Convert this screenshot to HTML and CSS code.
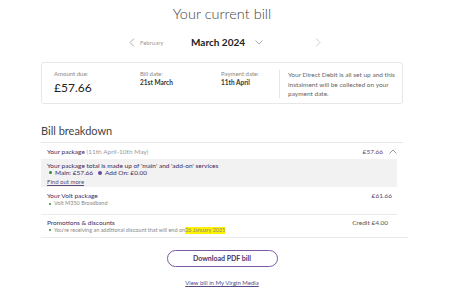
FILE: index.html
```html
<!DOCTYPE html>
<html><head>
    <meta charset="utf-8">
    <title>Your current bill</title>
    <link rel="stylesheet" href="styles.css">
</head>
<body>
    <div class="page">
        <h1 class="title">Your current bill</h1>

        <div class="month-nav">
            <span class="nav-prev">
                <svg width="6" height="9" viewBox="0 0 6 9"><path d="M5 0.5 L1 4.5 L5 8.5" fill="none" stroke="#aaa" stroke-width="1"/></svg>
                February
            </span>
            <span class="nav-current">March 2024
                <svg width="8" height="5" viewBox="0 0 8 5"><path d="M0.5 0.5 L4 4 L7.5 0.5" fill="none" stroke="#aaa" stroke-width="1"/></svg>
            </span>
            <span class="nav-next">
                <svg width="6" height="9" viewBox="0 0 6 9"><path d="M1 0.5 L5 4.5 L1 8.5" fill="none" stroke="#ccc" stroke-width="1"/></svg>
            </span>
        </div>

        <div class="summary">
            <div class="sum-col amount">
                <div class="label">Amount due:</div>
                <div class="big">£57.66</div>
            </div>
            <div class="sum-col bill-date">
                <div class="label">Bill date:</div>
                <div class="val">21st March</div>
            </div>
            <div class="sum-col pay-date">
                <div class="label">Payment date:</div>
                <div class="val">11th April</div>
            </div>
            <div class="sum-note">Your Direct Debit is all set up and this instalment will be collected on your payment date.</div>
        </div>

        <h2 class="section">Bill breakdown</h2>

        <div class="breakdown">
            <div class="row head">
                <span class="row-title">Your package <span class="muted">(11th April-10th May)</span></span>
                <span class="price">£57.66
                    <svg width="8" height="5" viewBox="0 0 8 5"><path d="M0.5 4.5 L4 1 L7.5 4.5" fill="none" stroke="#999" stroke-width="1"/></svg>
                </span>
            </div>
            <div class="info">
                <div>Your package total is made up of 'main' and 'add-on' services</div>
                <div class="split"><span class="dot green"></span>Main: £57.66 <span class="dot purple"></span>Add On: £0.00</div>
                <a class="find" href="#">Find out more</a>
            </div>
            <div class="row item">
                <div>
                    <div class="row-title">Your Volt package</div>
                    <div class="sub"><span class="dot green small"></span>Volt M350 Broadband</div>
                </div>
                <span class="price volt">£61.66</span>
            </div>
            <div class="row item last">
                <div>
                    <div class="row-title">Promotions &amp; discounts</div>
                    <div class="sub"><span class="dot green small"></span>You're receiving an additional discount that will end on<mark>26 January 2025</mark></div>
                </div>
                <span class="price credit">Credit £4.00</span>
            </div>
        </div>

        <div class="actions">
            <a class="btn" href="#">Download PDF bill</a>
            <a class="link" href="#">View bill in My Virgin Media</a>
        </div>
    </div>
</body></html>
```

FILE: styles.css
```css
body{
    margin: 0;
    background: #fff;
    font-family: Lato, "Noto Sans", sans-serif;
    color: #333;
}
.page{
    margin: 0 47px 0 41px;
}
.title{
    margin: 0;
    padding-top: 5px;
    text-align: center;
    font-weight: 300;
    font-size: 14.5px;
    color: #444;
    line-height: 18px;
}
.month-nav{
    display: flex;
    align-items: center;
    height: 22px;
    margin-top: 8px;
}
.nav-prev{
    display: flex;
    align-items: center;
    gap: 5px;
    margin-left: 88px;
    font-size: 6px;
    color: #999;
    width: 62px;
}
.nav-current{
    display: flex;
    align-items: center;
    gap: 10px;
    font-weight: bold;
    color: #222;
    font-size: 10px;
}
.nav-current svg{
    margin-top: 1px;
}
.nav-next{
    margin-left: 52px;
    display: flex;
}
.summary{
    margin-top: 9px;
    border: 1px solid #e6e6e6;
    border-radius: 3px;
    display: flex;
    padding: 6px 0 0 12px;
    box-sizing: border-box;
    height: 42px;
}
.sum-col{
    padding-top: 1px;
}
.sum-col .label{
    font-size: 6px;
    color: #888;
    line-height: 8px;
}
.amount{
    width: 86px;
}
.bill-date{
    width: 81px;
}
.pay-date{
    width: 58px;
}
.big{
    font-size: 12px;
    color: #222;
    line-height: 15px;
    margin-top: 2px;
}
.val{
    font-size: 6.5px;
    font-weight: bold;
    color: #333;
    line-height: 9px;
}
.sum-note{
    border-left: 1px solid #e6e6e6;
    padding-left: 8px;
    font-size: 6.5px;
    line-height: 9.7px;
    color: #666;
    width: 108px;
    height: 28px;
    margin-top: 1px;
}
.section{
    margin: 20px 0 0;
    font-weight: 400;
    font-size: 11px;
    color: #444;
    line-height: 14px;
    padding-bottom: 4px;
    border-bottom: 1px solid #e6e6e6;
}
.breakdown{
    width: 356px;
    font-size: 6.5px;
}
.row{
    display: flex;
    justify-content: space-between;
    align-items: flex-start;
    padding: 0 5px 0 6px;
}
.row.head{
    height: 16px;
    padding-right: 0;
    align-items: center;
}
.row-title{
    color: #3d2a5c;
    font-size: 6.5px;
}
.muted{
    color: #999;
}
.price{
    color: #5a4a74;
    display: flex;
    align-items: center;
    gap: 6px;
}
.price.volt{
    margin-top: 1px;
}
.price.credit{
    color: #555;
    margin-right: 9px;
    margin-top: 1px;
}
.info{
    background: #f2f2f2;
    padding: 3px 6px 1px;
    color: #3d2a5c;
    line-height: 7px;
}
.split{
    display: flex;
    align-items: center;
    color: #3d2a5c;
}
.dot{
    display: inline-block;
    width: 3px;
    height: 3px;
    border-radius: 50%;
    margin: 0 3px 0 2px;
}
.dot.green{
    background: #2a8a3a;
}
.dot.purple{
    background: #6a4a9a;
    width: 4px;
    height: 4px;
    margin-left: 5px;
}
.dot.small{
    width: 2px;
    height: 2px;
}
.find{
    display: block;
    margin-top: 2px;
    line-height: 8px;
    color: #5a4a74;
    text-decoration: underline;
    font-size: 6px;
}
.row.item{
    padding-top: 4px;
    padding-bottom: 6px;
    border-bottom: 1px solid #ebebeb;
}
.row.item .row-title{
    line-height: 9px;
}
.sub{
    font-size: 5.5px;
    line-height: 7.5px;
    color: #888;
    display: flex;
    align-items: center;
}
.row.item.last{
    padding-top: 3px;
    padding-bottom: 3px;
}
mark{
    background: #fff200;
    color: #888;
}
.breakdown .last{
    box-sizing: content-box;
    width: 350px;
    padding-right: 11px;
}
.actions{
    display: flex;
    flex-direction: column;
    align-items: center;
    padding-top: 12px;
}
.btn{
    display: block;
    width: 109px;
    height: 15px;
    line-height: 15px;
    border: 1.5px solid #7a5a9e;
    border-radius: 10px;
    text-align: center;
    color: #4a3268;
    font-weight: bold;
    font-size: 7px;
    text-decoration: none;
}
.link{
    margin-top: 12px;
    font-size: 6px;
    line-height: 8px;
    color: #5a4a84;
    text-decoration: underline;
}
```
